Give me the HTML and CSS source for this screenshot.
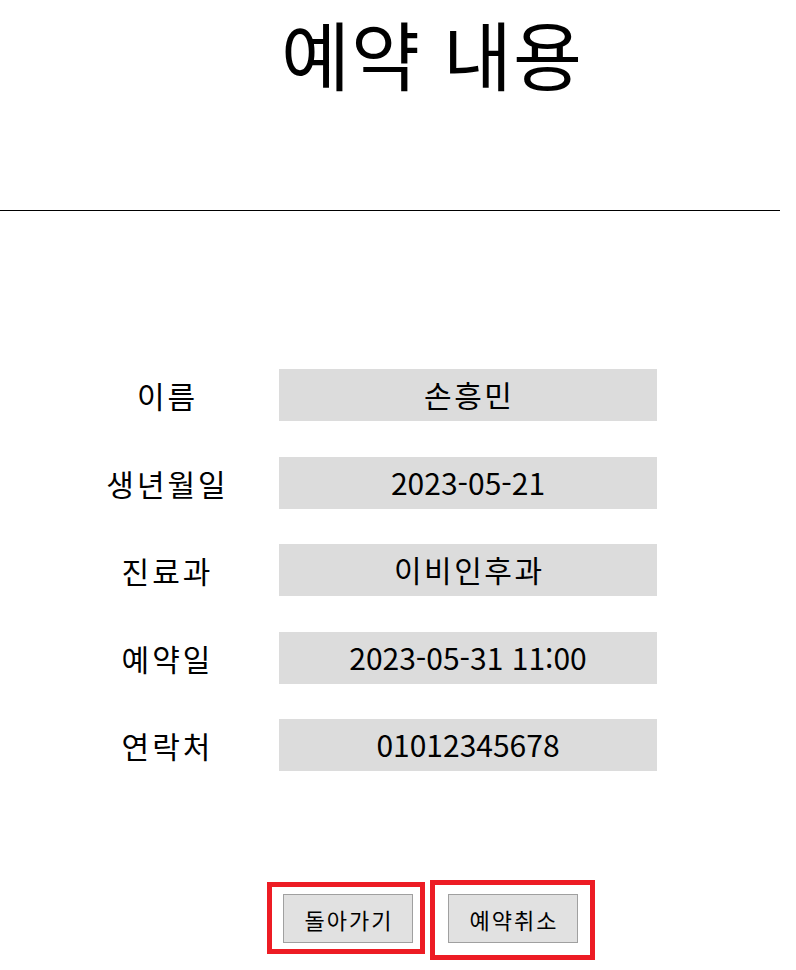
FILE: index.html
```html
<!DOCTYPE html>
<html lang="ko">
<head>
<meta charset="utf-8">
<title>예약 내용</title>
<link rel="stylesheet" href="styles.css">
</head>
<body>
<header class="head">
  <h1 class="title">예약 내용</h1>
</header>
<hr class="rule">
<main class="detail">
  <div class="row"><div class="label">이름</div><div class="value hangul">손흥민</div></div>
  <div class="row"><div class="label">생년월일</div><div class="value">2023-05-21</div></div>
  <div class="row"><div class="label">진료과</div><div class="value hangul">이비인후과</div></div>
  <div class="row"><div class="label">예약일</div><div class="value">2023-05-31 11:00</div></div>
  <div class="row"><div class="label">연락처</div><div class="value">01012345678</div></div>
</main>
<div class="actions">
  <div class="mark mark-back"><button class="btn" type="button">돌아가기</button></div>
  <div class="mark mark-cancel"><button class="btn" type="button">예약취소</button></div>
</div>
</body>
</html>
```
FILE: styles.css
```css
html, body {
  margin: 0;
  padding: 0;
  background: #fff;
}
body {
  font-family: "Noto Sans CJK KR", "Noto Sans", sans-serif;
  color: #000;
  width: 796px;
}
.head {
  height: 210px;
  box-sizing: border-box;
  padding-top: 8px;
}
.title {
  margin: 0 0 0 84px;
  width: 696px;
  text-align: center;
  font-size: 75px;
  font-weight: 400;
  line-height: 1.2;
  letter-spacing: 1px;
}
.rule {
  margin: 0;
  width: 780px;
  border: 0;
  border-top: 1px solid #000;
  height: 0;
}
.detail {
  margin: 158px 0 0 56px;
  display: flex;
  flex-direction: column;
  gap: 35.5px;
}
.row {
  display: grid;
  grid-template-columns: 220px 378px;
  column-gap: 3px;
  height: 52px;
  align-items: center;
}
.label {
  text-align: center;
  font-size: 30px;
  line-height: 50px;
  letter-spacing: 3px;
  padding-left: 3px;
}
.value {
  background: #dcdcdc;
  height: 52px;
  line-height: 50px;
  text-align: center;
  font-size: 30px;
}
.value.hangul {
  letter-spacing: 2.5px;
  padding-left: 2.5px;
}
.actions {
  display: flex;
  align-items: flex-start;
  gap: 5px;
  margin: 109px 0 0 267px;
}
.mark {
  border: 5px solid #ed1c24;
}
.mark-back {
  margin-top: 2px;
  padding: 7px 7px 6px 11px;
}
.mark-cancel {
  padding: 9px 12px 12px 13px;
}
.btn {
  display: block;
  width: 130px;
  height: 49px;
  box-sizing: border-box;
  background: #e1e1e1;
  border: 1px solid #a0a0a0;
  border-radius: 0;
  padding: 0 0 0 2px;
  font-family: "Noto Sans CJK KR", "Noto Sans", sans-serif;
  font-size: 22px;
  letter-spacing: 2px;
  color: #000;
}
```
